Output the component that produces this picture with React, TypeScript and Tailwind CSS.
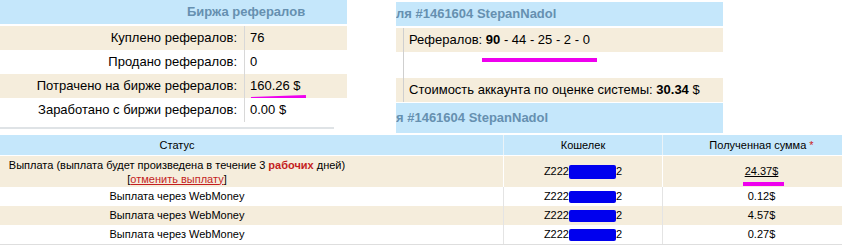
import React from "react";

const BLUE = "bg-[#c5e7fb]";
const BEIGE = "bg-[#f5eddc]";

function Mark({ className }: { className: string }) {
  return <span className={"absolute bg-[#ee00ee] " + className} />;
}

function LeftPanel() {
  const rows: [string, string, boolean][] = [
    ["Куплено рефералов:", "76", true],
    ["Продано рефералов:", "0", false],
    ["Потрачено на бирже рефералов:", "160.26 $", true],
    ["Заработано с биржи рефералов:", "0.00 $", false],
  ];
  return (
    <div className="w-[347px] flex flex-col">
      <div className={`${BLUE} h-[24px] flex items-center pl-[187px] font-bold text-[#6690b0] text-[13px]`}>
        Биржа рефералов
      </div>
      <div className="h-[2px]" />
      {rows.map(([l, v, b], i) => (
        <div key={i} className={`${b ? BEIGE : "bg-white"} h-[24px] flex items-stretch relative`}>
          <div className="w-[244px] flex items-center justify-end pr-[7px] text-[13px]">{l}</div>
          <div className="w-px bg-[#d8d8d8]" />
          <div className="flex items-center pl-[5px] text-[13px]">{v}</div>
          {i === 2 && <Mark className="left-[251px] top-[22px] w-[55px] h-[4px] -rotate-2" />}
        </div>
      ))}
      <div className="h-[5px]" />
      <div className="w-[334px] h-[2px] bg-[#dfe3e6]" />
    </div>
  );
}

function RightPanel() {
  return (
    <div className="ml-[49px] w-[327px] flex flex-col pt-[2px] overflow-hidden">
      <div className={`${BLUE} h-[24px] flex items-center font-bold text-[#6690b0] text-[13px] whitespace-nowrap`}>
        ля #1461604 StepanNadol
      </div>
      <div className="h-[2px]" />
      <div className="flex flex-col">
        <div className={`${BEIGE} h-[24px] pl-[7px] flex`}>
          <div className="border-l border-[#cfcfcf] pl-[5px] flex items-center text-[13px]">
            Рефералов:&nbsp;<b>90</b>&nbsp;- 44 - 25 - 2 - 0
          </div>
        </div>
        <div className="h-[26px] pl-[7px] flex relative">
          <div className="border-l border-[#cfcfcf]" />
          <Mark className="left-[86px] top-[6px] w-[115px] h-[4px]" />
        </div>
        <div className={`${BEIGE} h-[24px] pl-[7px] flex`}>
          <div className="border-l border-[#cfcfcf] pl-[5px] flex items-center text-[13px] whitespace-nowrap">
            Стоимость аккаунта по оценке системы:&nbsp;<b>30.34</b>&nbsp;$
          </div>
        </div>
      </div>
      <div className={`${BLUE} h-[30px] mt-[1px] flex items-center font-bold text-[#6690b0] text-[13px] whitespace-nowrap`}>
        я #1461604 StepanNadol
      </div>
    </div>
  );
}

function Wallet({ dots }: { dots?: boolean }) {
  return (
    <span className="inline-flex items-center">
      Z222
      <span className={`inline-block w-[47px] ${dots ? "h-[14px]" : "h-[12px]"} bg-[#0000ee] rounded-[2px]`} />
      2
    </span>
  );
}

function Table() {
  const rows = [
    { amt: "0.12$", bg: "bg-white" },
    { amt: "4.57$", bg: BEIGE },
    { amt: "0.27$", bg: "bg-white" },
  ];
  return (
    <div className="mt-[2px] ml-[-149px] w-[991px] text-[11px]">
      <div className={`${BLUE} h-[20px] flex`}>
        <div className="w-[652px] flex items-center justify-center">Статус</div>
        <div className="w-[159px] border-l border-[#eaf3f8] flex items-center justify-center">Кошелек</div>
        <div className="flex-1 border-l border-[#eaf3f8] flex items-center justify-center pl-[18px]">
          Полученная сумма&nbsp;<span className="text-[#cc2222]">*</span>
        </div>
      </div>
      <div className={`${BEIGE} h-[32px] flex border-t border-white`}>
        <div className="w-[652px] flex flex-col items-center justify-center leading-[14px]">
          <div>
            Выплата (выплата будет произведена в течение 3{" "}
            <b className="text-[#c41e1e]">рабочих</b> дней)
          </div>
          <div>
            [<span className="text-[#c41e1e] underline">отменить выплату</span>]
          </div>
        </div>
        <div className="w-[159px] border-l border-white flex items-center justify-center">
          <Wallet dots />
        </div>
        <div className="flex-1 border-l border-white flex items-center justify-center pl-[18px] relative">
          <span className="underline">24.37$</span>
          <Mark className="left-[80px] top-[26px] w-[41px] h-[4px]" />
        </div>
      </div>
      {rows.map((r, i) => (
        <div key={i} className={`${r.bg} h-[19px] flex`}>
          <div className="w-[652px] flex items-center justify-center">Выплата через WebMoney</div>
          <div className="w-[159px] border-l border-[#e4e4e4] flex items-center justify-center">
            <Wallet />
          </div>
          <div className="flex-1 border-l border-[#e4e4e4] flex items-center justify-center pl-[18px]">
            {r.amt}
          </div>
        </div>
      ))}
      <div className="h-px bg-[#dedede] w-[991px]" />
    </div>
  );
}

export default function App() {
  return (
    <div
      className="w-[854px] h-[250px] bg-white overflow-hidden text-black"
      style={{ fontFamily: "'Liberation Sans', Arial, sans-serif" }}
    >
      <div className="flex h-[133px]">
        <LeftPanel />
        <RightPanel />
      </div>
      <Table />
    </div>
  );
}
